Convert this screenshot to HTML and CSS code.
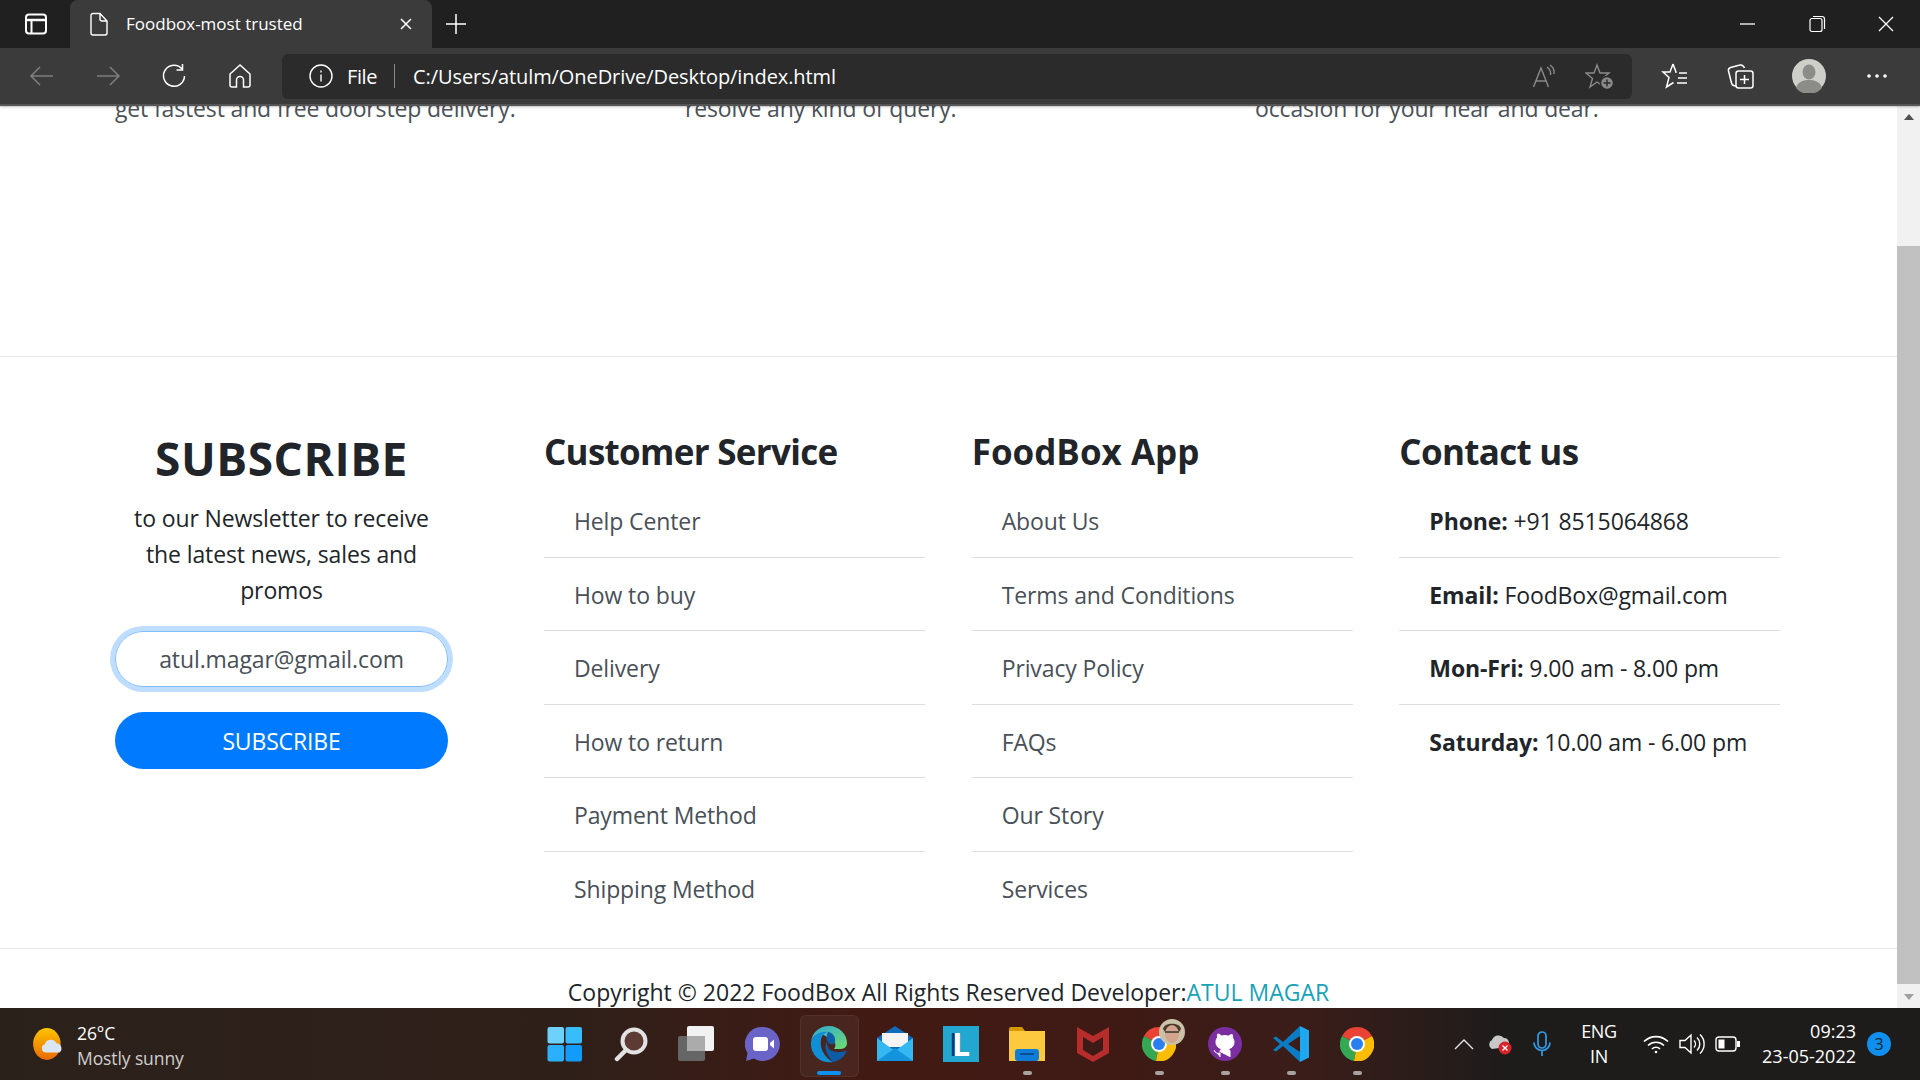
FILE: index.html
```html
<!DOCTYPE html>
<html lang="en">
<head>
<meta charset="utf-8">
<title>Foodbox-most trusted</title>
<link rel="stylesheet" href="styles.css">
</head>
<body>
<div class="browser">
  <header class="tabstrip">
    <div class="tabside">
      <svg class="ico" width="24" height="24" viewBox="0 0 24 24" fill="none" stroke="#fff" stroke-width="2"><rect x="2" y="2.500" width="20" height="19" rx="3"/><path d="M2.500 8h19" stroke-width="2.500"/><path d="M7.500 8v13"/></svg>
    </div>
    <div class="tab">
      <svg width="20" height="24" viewBox="0 0 20 24" fill="none" stroke="#fff" stroke-width="1.4"><path d="M2 3.500a2 2 0 0 1 2-2h7l7 7.500v12a2 2 0 0 1-2 2H4a2 2 0 0 1-2-2zM11 1.500V7a2 2 0 0 0 2 2h5"/></svg>
      <span class="tabtitle">Foodbox-most trusted</span>
      <svg width="14" height="14" viewBox="0 0 14 14" stroke="#fff" stroke-width="1.500"><path d="M2 2l10 10M12 2L2 12"/></svg>
    </div>
    <div class="newtab">
      <svg width="24" height="24" viewBox="0 0 24 24" stroke="#fff" stroke-width="1.500"><path d="M12 2v20M2 12h20"/></svg>
    </div>
    <div class="winctl">
      <svg width="18" height="18" viewBox="0 0 18 18" stroke="#fff" stroke-width="1.300"><path d="M1 9h15"/></svg>
      <svg width="18" height="18" viewBox="0 0 18 18" fill="none" stroke="#fff" stroke-width="1.200"><rect x="2" y="3.500" width="12" height="13" rx="2"/><path d="M5 1.500h9a2.500 2.500 0 0 1 2.500 2.500v10"/></svg>
      <svg width="18" height="18" viewBox="0 0 18 18" stroke="#fff" stroke-width="1.300"><path d="M2 2l14 14M16 2L2 16"/></svg>
    </div>
  </header>

  <nav class="toolbar">
    <div class="navbtns">
      <svg width="28" height="28" viewBox="0 0 28 28" fill="none" stroke="#7d7d7d" stroke-width="1.600"><path d="M3 14h22M12 5l-9 9 9 9"/></svg>
      <svg width="28" height="28" viewBox="0 0 28 28" fill="none" stroke="#7d7d7d" stroke-width="1.600"><path d="M3 14h22M16 5l9 9-9 9"/></svg>
      <svg width="28" height="28" viewBox="0 0 28 28" fill="none" stroke="#fff" stroke-width="1.500"><path d="M22 7a10.500 10.500 0 1 0 2.500 7M22.500 2v6h-6"/></svg>
      <svg width="28" height="28" viewBox="0 0 28 28" fill="none" stroke="#fff" stroke-width="1.500"><path d="M14 3L4 12v11a2 2 0 0 0 2 2h4.500v-7a3.500 3.500 0 0 1 7 0v7H22a2 2 0 0 0 2-2V12z"/></svg>
    </div>
    <div class="addr">
      <svg width="26" height="26" viewBox="0 0 26 26" fill="none" stroke="#fff" stroke-width="1.400"><circle cx="13" cy="13" r="11"/><path d="M13 11.500v7M13 7.500v2"/></svg>
      <span class="file">File</span>
      <span class="sep"></span>
      <span class="url">C:/Users/atulm/OneDrive/Desktop/index.html</span>
      <span class="addrspace"></span>
      <svg width="26" height="26" viewBox="0 0 26 26" fill="none" stroke="#8a8a8a" stroke-width="1.400"><path d="M1.500 24L9 5l7.500 19M4 18h10M15 4c3 2 4 5 3.500 8M18 2c3.500 2.500 4.500 6 4 9"/></svg>
      <svg class="favadd" width="30" height="28" viewBox="0 0 30 28" fill="none" stroke="#8a8a8a" stroke-width="1.400"><path d="M12 2l3 8h9l-6.500 5.500L19.500 24 12 19l-7 5 2.500-8.500L1 10h8z"/><circle cx="22" cy="20" r="6.500" fill="#8a8a8a" stroke="#2b2b2b"/><path d="M22 16.500v7M18.500 20h7" stroke="#2b2b2b"/></svg>
    </div>
    <div class="tools">
      <svg width="28" height="28" viewBox="0 0 28 28" fill="none" stroke="#fff" stroke-width="1.500"><path d="M12 2l3 8h-1M12 2L9 10H2l6 5.500L5.500 25l7-4.500M18 11h8M17 16h9M16 21h10"/></svg>
      <svg width="28" height="28" viewBox="0 0 28 28" fill="none" stroke="#fff" stroke-width="1.500"><rect x="10" y="9" width="17" height="17" rx="2.500"/><path d="M14 17.500h9M18.500 13v9M10 24c-3 0-4-1-4.500-3L2.500 9c-.4-2 .5-3 2-3.500L14 3c2-.4 3.500.5 4.500 3"/></svg>
      <span class="avatar">
        <svg width="34" height="34" viewBox="0 0 34 34"><circle cx="17" cy="17" r="17" fill="#cfcfca"/><ellipse cx="17" cy="13" rx="6.500" ry="7.500" fill="#8c8c88"/><path d="M4 29c2-7 8-8 13-8s11 1 13 8a17 17 0 0 1-26 0z" fill="#8c8c88"/></svg>
      </span>
      <svg class="more" width="22" height="8" viewBox="0 0 22 8" fill="#fff"><circle cx="3" cy="4" r="1.800"/><circle cx="11" cy="4" r="1.800"/><circle cx="19" cy="4" r="1.800"/></svg>
    </div>
  </nav>

  <div class="viewport">
    <main class="content">
      <section class="features">
        <p>get fastest and free doorstep delivery.</p>
        <p>resolve any kind of query.</p>
        <p>occasion for your near and dear.</p>
      </section>
      <footer class="footer">
        <div class="footgrid">
          <div class="subcol">
            <h1 class="subhead">SUBSCRIBE</h1>
            <p class="subtext">to our Newsletter to receive the latest news, sales and promos</p>
            <div class="emailbox">atul.magar@gmail.com</div>
            <div class="subbtn">SUBSCRIBE</div>
          </div>
          <div class="col">
            <h2 class="colhead">Customer Service</h2>
            <ul class="list">
              <li>Help Center</li><li>How to buy</li><li>Delivery</li><li>How to return</li><li>Payment Method</li><li>Shipping Method</li>
            </ul>
          </div>
          <div class="col">
            <h2 class="colhead wide">FoodBox App</h2>
            <ul class="list">
              <li>About Us</li><li>Terms and Conditions</li><li>Privacy Policy</li><li>FAQs</li><li>Our Story</li><li>Services</li>
            </ul>
          </div>
          <div class="col">
            <h2 class="colhead">Contact us</h2>
            <ul class="list contact">
              <li><b>Phone:</b> +91 8515064868</li><li><b>Email:</b> FoodBox@gmail.com</li><li><b>Mon-Fri:</b> 9.00 am - 8.00 pm</li><li><b>Saturday:</b> 10.00 am - 6.00 pm</li>
            </ul>
          </div>
        </div>
        <div class="copy">Copyright © 2022 FoodBox All Rights Reserved Developer:<a class="dev">ATUL MAGAR</a></div>
      </footer>
    </main>
    <aside class="scrollbar">
      <div class="arrow"><svg width="12" height="8" viewBox="0 0 12 8" fill="#505050"><path d="M6 1l5 6H1z"/></svg></div>
      <div class="track"><div class="thumb"></div></div>
      <div class="arrow"><svg width="12" height="8" viewBox="0 0 12 8" fill="#a0a0a0"><path d="M6 7L1 1h10z"/></svg></div>
    </aside>
  </div>

  <div class="taskbar">
    <div class="weather">
      <svg width="36" height="36" viewBox="0 0 34 34"><defs><linearGradient id="sun" x1="0" y1="0" x2="0" y2="1"><stop offset="0" stop-color="#ffc400"/><stop offset="1" stop-color="#e86a00"/></linearGradient></defs><ellipse cx="15" cy="17" rx="13" ry="15" fill="url(#sun)"/><path d="M14 25a4 4 0 0 1-1-7.800 6 6 0 0 1 11-1 5 5 0 0 1 3 8.800z" fill="#dbe6f5"/></svg>
      <div class="wtext"><div class="temp">26°C</div><div class="wdesc">Mostly sunny</div></div>
    </div>
    <div class="apps">
      <span class="app"><svg width="36" height="36" viewBox="0 0 36 36"><rect x="0.500" y="1" width="16.500" height="16.500" rx="2" fill="#6dd1fb"/><rect x="18.500" y="1" width="16.500" height="16.500" rx="2" fill="#37bdfb"/><rect x="0.500" y="19" width="16.500" height="16.500" rx="2" fill="#2cb0fb"/><rect x="18.500" y="19" width="16.500" height="16.500" rx="2" fill="#129cf9"/></svg></span>
      <span class="app"><svg width="34" height="36" viewBox="0 0 34 36" fill="none"><circle cx="20" cy="15" r="11.500" fill="#5e3a35" stroke="#e2e2e2" stroke-width="4"/><path d="M12 24L3 33" stroke="#e2e2e2" stroke-width="4.500" stroke-linecap="round"/></svg></span>
      <span class="app"><svg width="38" height="36" viewBox="0 0 38 36"><rect x="0" y="10" width="27" height="25" rx="2" fill="#666"/><rect x="9" y="0" width="27" height="25" rx="2" fill="#f2f2f2"/><rect x="9" y="10" width="18" height="15" fill="#ababab"/></svg></span>
      <span class="app"><svg width="36" height="36" viewBox="0 0 36 36"><path d="M18 1a17 17 0 1 1-9 31.500L1 35l1.500-8A17 17 0 0 1 18 1z" fill="#6a64c8"/><rect x="8" y="11" width="15" height="14" rx="3" fill="#fff"/><path d="M25 17l4-3.500v9L25 19z" fill="#fff"/></svg></span>
      <span class="app active"><svg width="38" height="38" viewBox="0 0 38 38"><defs><linearGradient id="edge" x1="0" y1="0" x2="1" y2="1"><stop offset="0" stop-color="#2fa8d8"/><stop offset="1" stop-color="#6fdc6f"/></linearGradient></defs><path d="M1 17C2 7 10 1 19 1c10 0 18 8 18 17 0 5-4 6-8 6H24c3-4 1-10-6-11C10 6 3 10 1 17z" fill="url(#edge)"/><path d="M1 17C3 10 10 6 18 7c-8 2-9 12-5 20 2 4 6 8 10 10-12 2-23-7-22-20z" fill="#0f8fd8"/><path d="M18 7c6 1 9 7 6 12-4 1-7-1-6-4-4 4-4 12 5 22 7-1 12-6 14-12-4 3-14 3-18-1-3-5-3-14-1-17z" fill="#0d5ca8"/></svg><i class="pin blue"></i></span>
      <span class="app"><svg width="36" height="36" viewBox="0 0 36 36"><path d="M0 12L18 0l18 12v23H0z" fill="#0f6cbd"/><path d="M5 7h26v14H5z" fill="#f4f4f4"/><path d="M0 12l18 13 18-13v23H0z" fill="#35b8f1"/><path d="M0 35l18-13 18 13z" fill="#1493df"/></svg></span>
      <span class="app"><span class="lsq"><span class="lletter">L</span></span></span>
      <span class="app"><svg width="36" height="34" viewBox="0 0 36 34"><path d="M0 2a2 2 0 0 1 2-2h11l3 4h-16z" fill="#d49a00"/><path d="M0 4h36v30H0z" fill="#fdc93f"/><rect x="6" y="22" width="24" height="12" rx="3" fill="#0f7dd8"/><path d="M11 27h14" stroke="#0a4f95" stroke-width="2"/></svg><i class="pin"></i></span>
      <span class="app"><svg width="32" height="36" viewBox="0 0 32 36"><path d="M0 1l16 9 16-9v26L16 36 0 27z" fill="#b82c2c"/><path d="M6 11l10 6 10-6v13l-10 6-10-6z" fill="#3c1a16"/></svg></span>
      <span class="app">
        <svg class="chrome" width="34" height="34" viewBox="0 0 34 34"><path d="M17 17L2 9a17 17 0 0 1 30 0z" fill="#ea4335"/><path d="M17 17L2 9a17 17 0 0 0 12 25z" fill="#34a853"/><path d="M17 17l15-8a17 17 0 0 1-18 25z" fill="#fbbc04"/><circle cx="17" cy="17" r="8" fill="#fff"/><circle cx="17" cy="17" r="6" fill="#2a7ff0"/></svg>
        <svg class="face" width="26" height="26" viewBox="0 0 26 26"><circle cx="13" cy="13" r="13" fill="#c9c2a8"/><path d="M4 10c1-7 17-7 18 0l-2 3H6z" fill="#4a3a2c"/><ellipse cx="13" cy="15" rx="7" ry="9" fill="#d2a58c"/><path d="M6 13h14" stroke="#333" stroke-width="1.500"/></svg>
        <i class="pin"></i>
      </span>
      <span class="app"><svg width="34" height="34" viewBox="0 0 34 34"><circle cx="17" cy="17" r="17" fill="#7b2ea0"/><path d="M12 30v-4c-4 1-5-1-6-3M22 30v-5c0-2-1-3-2-3 4-1 6-3 6-7 0-2-.6-3-1.500-4 .3-1 .2-2.500-.3-3.500-1.500 0-3 1-3.700 1.600a11 11 0 0 0-7 0C12.800 8 11.300 7 9.800 7c-.5 1-.6 2.500-.3 3.500C8.600 11.500 8 13 8 15c0 4 2 6 6 7-1 0-2 1-2 3" fill="#fff" stroke="#fff"/></svg><i class="pin"></i></span>
      <span class="app"><svg width="36" height="36" viewBox="0 0 36 36"><path d="M27 0l9 4.500v27L27 36z" fill="#1fa8f0"/><path d="M27 0L10 16 3 10.500 0 12l7 6-7 6 3 1.500L10 20l17 16V26L15 18 27 10z" fill="#0b7cc4"/></svg><i class="pin"></i></span>
      <span class="app"><svg width="34" height="34" viewBox="0 0 34 34"><path d="M17 17L2 9a17 17 0 0 1 30 0z" fill="#ea4335"/><path d="M17 17L2 9a17 17 0 0 0 12 25z" fill="#34a853"/><path d="M17 17l15-8a17 17 0 0 1-18 25z" fill="#fbbc04"/><circle cx="17" cy="17" r="8" fill="#fff"/><circle cx="17" cy="17" r="6" fill="#2a7ff0"/></svg><i class="pin"></i></span>
    </div>
    <div class="tray">
      <span class="trayitem chev"><svg width="20" height="12" viewBox="0 0 20 12" fill="none" stroke="#e8e8e8" stroke-width="1.300"><path d="M1 11l9-9 9 9"/></svg></span>
      <span class="trayitem cloud"><svg width="26" height="24" viewBox="0 0 26 24"><path d="M5 17a5 5 0 0 1 0-9 7 7 0 0 1 12-2 5 5 0 0 1 3 9z" fill="#c8c8c8"/><circle cx="18" cy="16" r="6.500" fill="#d8232a"/><path d="M15.500 13.500l5 5M20.500 13.500l-5 5" stroke="#fff" stroke-width="1.300"/></svg></span>
      <span class="trayitem mic"><svg width="20" height="26" viewBox="0 0 20 26" fill="none" stroke="#2f9de8" stroke-width="1.700"><rect x="6" y="1" width="8" height="16" rx="4"/><path d="M2 11.500a8 8 0 0 0 16 0M10 20v5"/></svg></span>
      <span class="trayitem lang"><span>ENG</span><span>IN</span></span>
      <span class="trayitem wifi"><svg width="26" height="20" viewBox="0 0 26 20" fill="none" stroke="#fff" stroke-width="1.700"><path d="M1 7.500a17 17 0 0 1 24 0M5 11.500a11.500 11.500 0 0 1 16 0M9 15a5.500 5.500 0 0 1 8 0"/><circle cx="13" cy="18" r="1.300" fill="#fff" stroke="none"/></svg></span>
      <span class="trayitem vol"><svg width="26" height="22" viewBox="0 0 26 22" fill="none" stroke="#fff" stroke-width="1.400"><path d="M1 7.500h5L12 2v18l-6-5.500H1zM15 7.500a5 5 0 0 1 0 7M18 4.500a9 9 0 0 1 0 13M21 1.500a13 13 0 0 1 0 19"/></svg></span>
      <span class="trayitem batt"><svg width="26" height="16" viewBox="0 0 26 16" fill="none" stroke="#fff" stroke-width="1.400"><rect x="1" y="1" width="20" height="14" rx="3"/><rect x="3.500" y="3.500" width="6" height="9" fill="#fff" stroke="none"/><rect x="22" y="5" width="3" height="6" fill="#fff" stroke="none"/></svg></span>
      <span class="clock"><span>09:23</span><span>23-05-2022</span></span>
      <span class="badge">3</span>
    </div>
  </div>
</div>
</body>
</html>
```
FILE: styles.css
```css
* { box-sizing: border-box; }
html, body { margin: 0; padding: 0; height: 100%; overflow: hidden; }
body { font-family: "Open Sans", "Noto Sans", sans-serif; color: #212529; background: #fff; }
.browser { display: flex; flex-direction: column; width: 1920px; height: 1080px; overflow: hidden; }

.tabstrip { display: flex; align-items: flex-end; height: 48px; background: #202020; flex: none; position: relative; z-index: 3; }
.tabside { width: 70px; height: 48px; display: flex; align-items: center; padding-left: 24px; }
.tab { width: 362px; height: 48px; background: #3b3b3b; border-radius: 8px 8px 0 0; display: flex; align-items: center; padding: 0 19px 0 19px; }
.tabtitle { flex: 1; margin-left: 17px; margin-top: -2px; color: #fff; font-size: 17px; letter-spacing: 0; }
.newtab { width: 56px; height: 48px; display: flex; align-items: center; justify-content: center; margin-left: -4px; }
.winctl { margin-left: auto; height: 48px; display: flex; align-items: center; gap: 51px; padding-right: 25px; }

.toolbar { display: flex; align-items: center; height: 58px; background: #3b3b3b; flex: none; border-bottom: 2px solid #555; box-shadow: 0 1px 2px rgba(0,0,0,.25); position: relative; z-index: 3; }
.navbtns { display: flex; align-items: center; gap: 38px; width: 282px; padding-left: 28px; }
.addr { width: 1350px; height: 45px; background: #2b2b2b; border-radius: 6px; display: flex; align-items: center; padding-left: 26px; color: #fff; font-size: 20px; }
.file { margin-left: 13px; letter-spacing: -0.4px; margin-top: 1px; }
.sep { width: 1px; height: 24px; background: #8a8a8a; margin: 0 18px 0 17px; }
.url { letter-spacing: -0.08px; margin-top: 1px; }
.addrspace { flex: 1; }
.favadd { margin: 2px 17px 0 27px; }
.tools { flex: 1; display: flex; align-items: center; padding-left: 29px; gap: 37px; }
.avatar { display: flex; margin: 0 0 0 1px; }
.more { margin-left: 3px; }

.viewport { flex: 1; min-height: 0; display: flex; background: #fff; }
.content { flex: 1; min-width: 0; overflow: hidden; }
.features { display: grid; grid-template-columns: 570px 570px 1fr; padding-left: 115px; margin-top: -16px; height: 266px; font-size: 23px; line-height: 36px; color: #4a5157; letter-spacing: -0.15px; }
.features p { margin: 0; }

.footer { border-top: 1.500px solid #e8e8e8; }
.footgrid { display: grid; grid-template-columns: 382.300px 381px 381px 381px; column-gap: 46.700px; padding: 73px 0 0 115px; height: 591px; }
.subcol { width: 333px; text-align: center; }
.subhead { margin: -1px 0 13px; font-size: 46px; line-height: 58px; font-weight: 700; letter-spacing: 0.55px; white-space: nowrap; }
.subtext { margin: 0 0 23px; padding: 0 15px; font-size: 23px; line-height: 36px; letter-spacing: -0.12px; }
.emailbox { height: 56px; border: 1.500px solid #80bdff; border-radius: 28px; box-shadow: 0 0 0 5px rgba(0,123,255,.25); font-size: 23px; line-height: 54px; color: #495057; letter-spacing: -0.1px; }
.subbtn { height: 57px; margin-top: 25px; border-radius: 29px; background: #007bff; color: #fff; font-size: 23px; line-height: 58px; letter-spacing: -0.15px; }
.colhead { margin: 0 0 10px; font-size: 35px; line-height: 44px; font-weight: 700; letter-spacing: -0.7px; white-space: nowrap; }
.colhead.wide { letter-spacing: 0; }
.list { list-style: none; margin: 0; padding: 0; font-size: 23px; color: #495057; letter-spacing: -0.12px; }
.list li { height: 73.500px; padding: 19px 0 0 30px; line-height: 36px; border-bottom: 1.500px solid #dedede; }
.list li:last-child { border-bottom: 0; }
.contact { color: #212529; }
.copy { border-top: 1.500px solid #e8e8e8; text-align: center; padding-top: 25px; font-size: 23px; line-height: 36px; letter-spacing: 0; }
.dev { color: #17a2b8; }

.scrollbar { width: 23px; flex: none; background: #f1f1f1; display: flex; flex-direction: column; }
.arrow { height: 22px; flex: none; display: flex; align-items: center; justify-content: center; }
.track { flex: 1; padding-top: 118px; }
.thumb { height: 738px; background: #c1c1c1; }

.taskbar { flex: none; height: 72px; display: grid; grid-template-columns: 532px 858px 1fr; align-items: center; background: linear-gradient(90deg, #2b211b 0%, #2f1f19 30%, #421a14 45%, #3f1a15 58%, #3a1d19 68%, #1e1c1b 78%, #1e1c1b 100%); color: #fff; }
.weather { display: flex; align-items: center; padding-left: 31px; gap: 10px; }
.wtext { font-size: 17.500px; line-height: 25px; letter-spacing: -0.1px; padding-top: 3px; }
.temp { color: #fff; }
.wdesc { color: #cfcfcf; }
.apps { display: flex; height: 72px; }
.app { width: 66px; height: 72px; display: flex; align-items: center; justify-content: center; position: relative; }
.active::before { content: ""; position: absolute; left: 4px; right: 3px; top: 7px; height: 60px; background: rgba(255,255,255,.05); border: 1px solid rgba(255,255,255,.05); border-radius: 6px; }
.active svg { position: relative; }
.pin { position: absolute; bottom: 5px; left: 50%; margin-left: -4px; width: 9px; height: 4px; border-radius: 2px; background: #a8a3a0; }
.pin.blue { width: 24px; margin-left: -12px; background: #0f8ff0; }
.lsq { width: 36px; height: 36px; background: #22a7d1; display: flex; align-items: center; justify-content: center; }
.lletter { color: #fff; font-weight: 700; font-size: 32px; line-height: 36px; text-shadow: -3px 0 0 #0d3a78; }
.chrome { position: relative; }
.face { position: absolute; top: 11px; left: 33px; }
.tray { display: flex; align-items: center; height: 72px; padding-left: 64px; }
.trayitem { display: flex; justify-content: center; align-items: center; flex: none; }
.chev { width: 20px; }
.cloud { width: 26px; margin-left: 13px; }
.mic { width: 20px; margin-left: 19px; }
.lang { width: 40px; margin-left: 27px; flex-direction: column; font-size: 18px; line-height: 25px; letter-spacing: -0.3px; }
.wifi { width: 26px; margin-left: 24px; }
.vol { width: 26px; margin-left: 10px; }
.batt { width: 26px; margin-left: 10px; }
.clock { width: 100px; margin-left: 15px; display: flex; flex-direction: column; align-items: flex-end; font-size: 18px; line-height: 25px; letter-spacing: 0; }
.badge { width: 24px; height: 24px; margin-left: 11px; border-radius: 50%; background: #0f8ff0; color: #10242f; text-align: center; font-size: 16px; line-height: 24px; }
```
